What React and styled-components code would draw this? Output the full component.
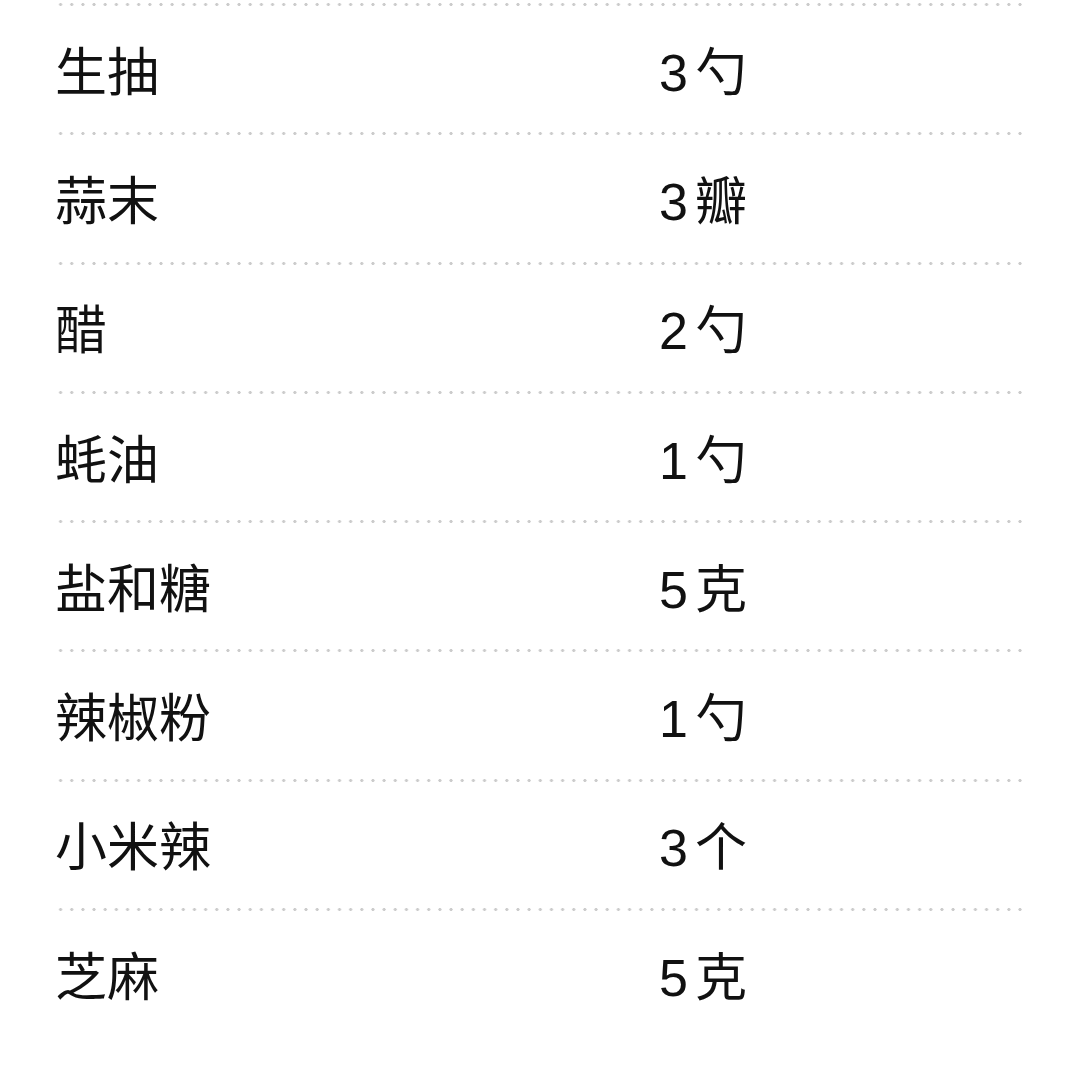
import React from 'react';
import styled, { createGlobalStyle } from 'styled-components';

const GlobalStyle = createGlobalStyle`
  html, body {
    margin: 0;
    padding: 0;
    background: #ffffff;
  }
  body {
    font-family: 'Liberation Sans', 'Noto Sans CJK SC', sans-serif;
    color: #111111;
  }
`;

const List = styled.div`
  padding: 3px 57px 0 55px;
`;

const Row = styled.div`
  display: flex;
  flex-direction: column;
`;

const Dots = styled.div`
  height: 3px;
  background-image: radial-gradient(circle, #cbcbcb 1.3px, transparent 1.8px);
  background-size: 11.17px 3px;
  background-repeat: repeat-x;
  background-position: 0 0;
`;

const Line = styled.div`
  box-sizing: border-box;
  display: grid;
  grid-template-columns: 604px 1fr;
  align-items: center;
  height: 126.3px;
  padding-top: 7px;
  font-size: 52px;
  line-height: 1;
`;

const Name = styled.span``;

const Amount = styled.span`
  letter-spacing: 7px;
`;

const items = [
  ['生抽', '3勺'],
  ['蒜末', '3瓣'],
  ['醋', '2勺'],
  ['蚝油', '1勺'],
  ['盐和糖', '5克'],
  ['辣椒粉', '1勺'],
  ['小米辣', '3个'],
  ['芝麻', '5克'],
];

const App = () => {
  return (
    <>
      <GlobalStyle />
      <List>
        {items.map(([name, amount]) => (
          <Row key={name}>
            <Dots />
            <Line>
              <Name>{name}</Name>
              <Amount>{amount}</Amount>
            </Line>
          </Row>
        ))}
      </List>
    </>
  );
};

export default App;
